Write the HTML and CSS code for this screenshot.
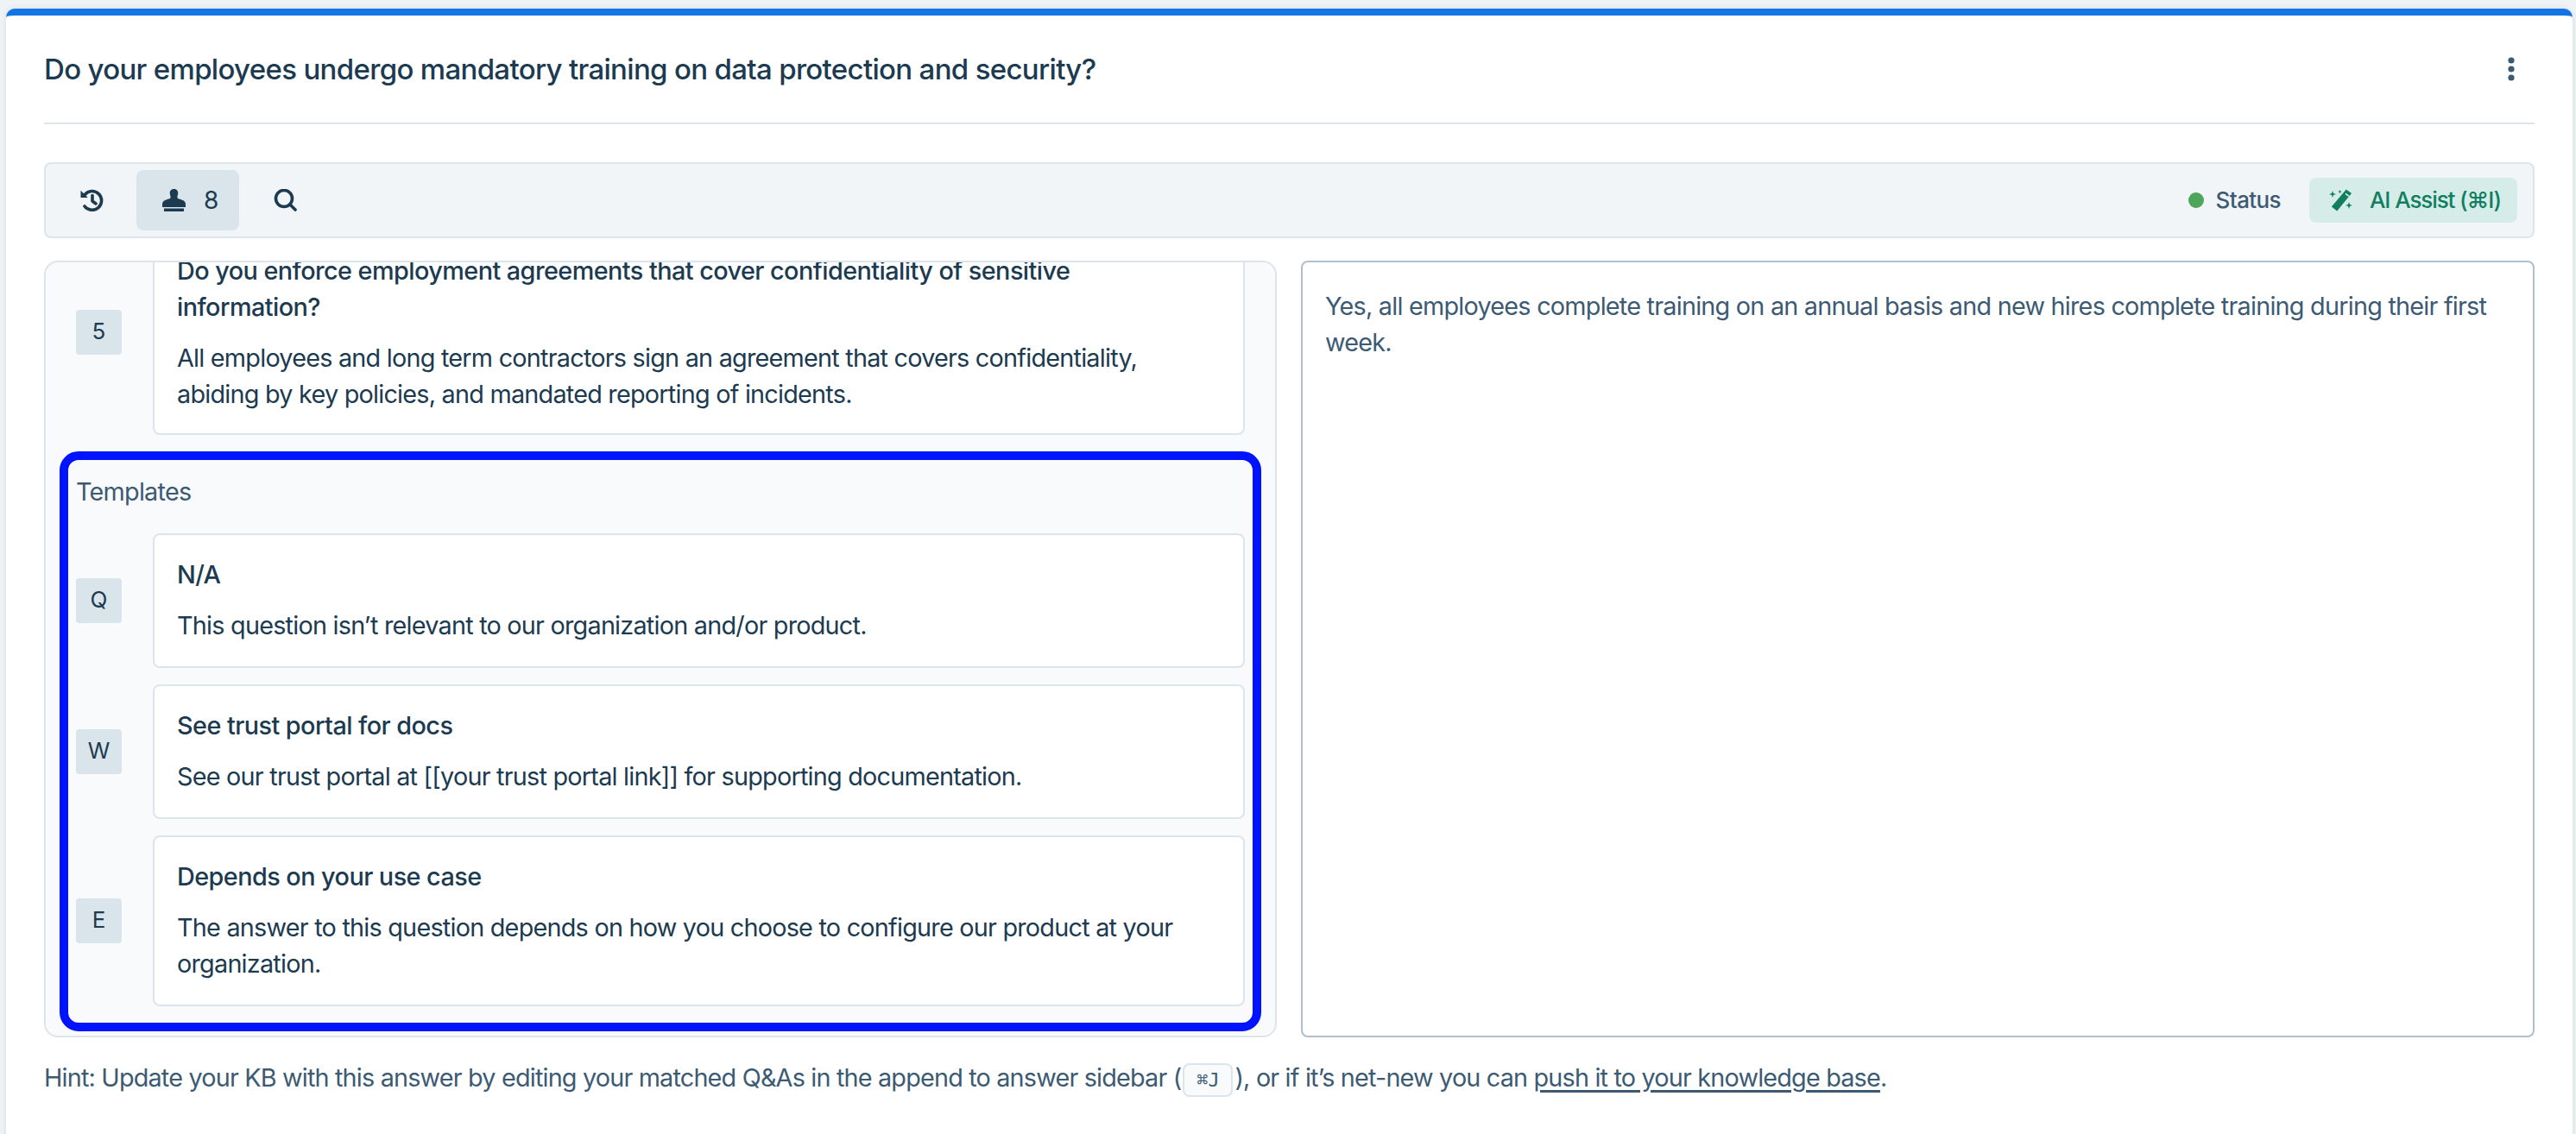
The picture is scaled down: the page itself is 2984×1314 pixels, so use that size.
FILE: index.html
```html
<!DOCTYPE html>
<html lang="en">
<head>
    <meta charset="UTF-8">
    <title>Question</title>
    <link rel="stylesheet" href="styles.css">
</head>
<body>
    <div class="question-card">
        <header class="question-header">
            <h1>Do your employees undergo mandatory training on data protection and security?</h1>
            <button class="kebab" aria-label="More">
                <svg width="8" height="28" viewBox="0 0 8 28"><circle cx="4" cy="4" r="3.6"/><circle cx="4" cy="14" r="3.6"/><circle cx="4" cy="24" r="3.6"/></svg>
            </button>
        </header>

        <div class="toolbar">
            <button class="tool tool-history">
                <svg class="icon" viewBox="0 0 26 26"><path d="M0 1.700v8.300h8.300z"/><path class="line" d="M4.800 6.500A10.900 10.900 0 1 1 4.500 20M13.500 7.500V14l4 3"/></svg>
            </button>
            <button class="tool tool-active">
                <svg class="icon" viewBox="0 0 27 26"><path d="M13.500 0C10.800 0 8.700 2 8.700 4.600C8.700 6.600 9.600 7.600 9.600 9.700C9.600 10.300 9.400 10.700 8.800 11L4.500 12.500C2 13.200 0 15 0 17.500V21H27V17.500C27 15 25 13.200 22.500 12.500L18.200 11C17.600 10.700 17.400 10.300 17.400 9.700C17.400 7.600 18.300 6.600 18.300 4.600C18.300 2 16.200 0 13.500 0Z"/><rect x="2" y="22.500" width="23" height="3.500"/></svg>
                <span>8</span>
            </button>
            <button class="tool tool-search">
                <svg class="icon" viewBox="0 0 27 26"><circle class="line" cx="12" cy="11" r="9.500"/><path class="line" d="M19 18l6 6"/></svg>
            </button>
            <div class="toolbar-right">
                <div class="status"><i class="dot"></i>Status</div>
                <button class="ai-assist">
                    <svg class="wand" width="28" height="26" viewBox="0 0 28 26"><path d="M20.800 0.500l6.200 4.600-16.800 20.400-6.400-4.900z"/><path class="notch" d="M19.500 6l4 3 1-1.300-4-3z"/><path d="M5 2l1 3 3 1-3 1-1 3-1-3-3-1 3-1zM13.500 .8l.6 1.700 1.700.6-1.700.6-.6 1.700-.6-1.700-1.700-.6 1.700-.6zM24 15l1 3 3 1-3 1-1 3-1-3-3-1 3-1z"/></svg>
                    <span>AI Assist (⌘I)</span>
                </button>
            </div>
        </div>

        <div class="panels">
            <div class="answers">
                <div class="answer-row numbered">
                    <span class="key">5</span>
                    <div class="answer">
                        <h3>Do you enforce employment agreements that cover confidentiality of sensitive information?</h3>
                        <p>All employees and long term contractors sign an agreement that covers confidentiality, abiding by key policies, and mandated reporting of incidents.</p>
                    </div>
                </div>
                <section class="templates">
                    <h2>Templates</h2>
                    <div class="answer-row">
                        <span class="key">Q</span>
                        <div class="answer">
                            <h3>N/A</h3>
                            <p>This question isn’t relevant to our organization and/or product.</p>
                        </div>
                    </div>
                    <div class="answer-row">
                        <span class="key">W</span>
                        <div class="answer">
                            <h3>See trust portal for docs</h3>
                            <p>See our trust portal at [[your trust portal link]] for supporting documentation.</p>
                        </div>
                    </div>
                    <div class="answer-row">
                        <span class="key">E</span>
                        <div class="answer">
                            <h3>Depends on your use case</h3>
                            <p>The answer to this question depends on how you choose to configure our product at your organization.</p>
                        </div>
                    </div>
                </section>
            </div>
            <div class="response">Yes, all employees complete training on an annual basis and new hires complete training during their first week.</div>
        </div>

        <p class="hint">Hint: Update your KB with this answer by editing your matched Q&amp;As in the append to answer sidebar (<kbd>⌘J</kbd>), or if it’s net-new you can <a href="#">push it to your knowledge base</a>.</p>
    </div>
</body>
</html>
```

FILE: styles.css
```css
* {
    margin: 0;
    padding: 0;
    box-sizing: border-box;
}

html, body {
    height: 100%;
    overflow: hidden;
}

body {
    font-family: Inter, 'Liberation Sans', sans-serif;
    font-size: 28.8px;
    line-height: 42px;
    letter-spacing: -0.77px;
    color: #1c3a50;
    background-color: #eff3f6;
    padding: 10px 4px 0 7px;
}

button {
    font: inherit;
    letter-spacing: inherit;
    color: inherit;
    background: none;
    border: none;
}

.question-card {
    height: 1400px;
    background-color: white;
    border-top: 8px solid #1374e4;
    border-radius: 10px 10px 0 0;
    padding: 0 44px;
    box-shadow: 0 0 6px rgba(40, 70, 100, 0.12);
}

.question-header {
    height: 126px;
    display: flex;
    justify-content: space-between;
    align-items: center;
    border-bottom: 2px solid #dce5ec;
}

.question-header h1 {
    font-size: 33px;
    font-weight: 500;
    letter-spacing: -0.68px;
}

.kebab {
    margin-right: 23px;
    display: flex;
}

.kebab svg {
    fill: #3d5a73;
}

.toolbar {
    height: 88px;
    margin-top: 44px;
    background-color: #f1f5f8;
    border: 2px solid #dce5ec;
    border-radius: 8px;
    display: flex;
    align-items: center;
    padding: 0 18px 0 26px;
}

.tool {
    height: 70px;
    display: flex;
    align-items: center;
    border-radius: 8px;
}

.tool-history {
    width: 54px;
    margin-right: 25px;
    justify-content: center;
}

.tool-active {
    width: 119px;
    gap: 21px;
    padding-left: 30px;
    background-color: #d9e4eb;
    font-size: 28px;
}

.tool-search {
    margin-left: 40px;
}

.icon {
    width: 27px;
    height: 26px;
    fill: #1c3a50;
}

.line {
    fill: none;
    stroke: #1c3a50;
    stroke-width: 3.6;
    stroke-linecap: round;
    stroke-linejoin: round;
}

.toolbar-right {
    margin-left: auto;
    display: flex;
    align-items: center;
    gap: 33px;
}

.status {
    display: flex;
    align-items: center;
    gap: 14px;
    color: #3d5a73;
    font-weight: 500;
    font-size: 26px;
    letter-spacing: -0.6px;
}

.dot {
    width: 18px;
    height: 18px;
    border-radius: 50%;
    background-color: #4ea65c;
}

.ai-assist {
    height: 52px;
    width: 241px;
    display: flex;
    align-items: center;
    gap: 20px;
    padding-left: 22px;
    border-radius: 8px;
    background-color: #d5ece8;
    color: #117f5f;
    font-weight: 500;
    font-size: 26px;
    letter-spacing: -1.1px;
    white-space: nowrap;
}

.wand {
    fill: #117f5f;
    flex-shrink: 0;
}

.wand .notch {
    fill: #d5ece8;
}

.panels {
    margin-top: 26px;
    height: 900px;
    display: flex;
    gap: 28px;
}

.answers {
    flex: 0 0 1428px;
    background-color: #f8fafc;
    border: 2px solid #dce5ec;
    border-radius: 16px;
    overflow: hidden;
    display: flex;
    flex-direction: column;
    justify-content: flex-end;
    padding: 0 16px 5px;
}

.answer-row {
    display: flex;
    align-items: center;
    gap: 36px;
}

.numbered {
    margin: 0 19px;
    flex-shrink: 0;
}

.numbered .answer {
    padding-bottom: 24px;
}

.key {
    flex-shrink: 0;
    width: 53px;
    height: 52px;
    display: flex;
    align-items: center;
    justify-content: center;
    background-color: #d9e4eb;
    border-radius: 4px;
    font-size: 26px;
    letter-spacing: 0;
    padding-bottom: 2px;
}

.answer {
    flex-grow: 1;
    background-color: white;
    border: 2px solid #dce5ec;
    border-radius: 8px;
    padding: 25px 40px 26px 26px;
}

.answer h3 {
    font-size: 28.8px;
    font-weight: 500;
    letter-spacing: -0.55px;
    margin-bottom: 17px;
}

.templates {
    flex-shrink: 0;
    margin-top: 19px;
    border: 10px solid #0013ff;
    border-radius: 22px;
    padding: 16px 9px 19px 9px;
    display: flex;
    flex-direction: column;
    gap: 19px;
}

.templates h2 {
    font-size: 28.8px;
    font-weight: 400;
    color: #3d5a73;
    margin-bottom: 8px;
}

.response {
    flex: 1 1 0;
    border: 2px solid #b0bfcc;
    border-radius: 8px;
    padding: 30px 26px;
    color: #3d5a73;
}

.hint {
    margin-top: 26px;
    color: #3d5a73;
    letter-spacing: -0.82px;
    white-space: nowrap;
}

.hint kbd {
    display: inline-block;
    height: 39px;
    width: 58px;
    margin: 0 2px;
    text-align: center;
    vertical-align: middle;
    font-family: 'DejaVu Sans Mono', 'Liberation Mono', monospace;
    font-size: 22px;
    line-height: 35px;
    letter-spacing: 0;
    background-color: #f8fafc;
    border: 2px solid #dce5ec;
    border-radius: 8px;
}

.hint a {
    color: #3d5a73;
    text-decoration-thickness: 3px;
    text-underline-offset: 4px;
}
```
